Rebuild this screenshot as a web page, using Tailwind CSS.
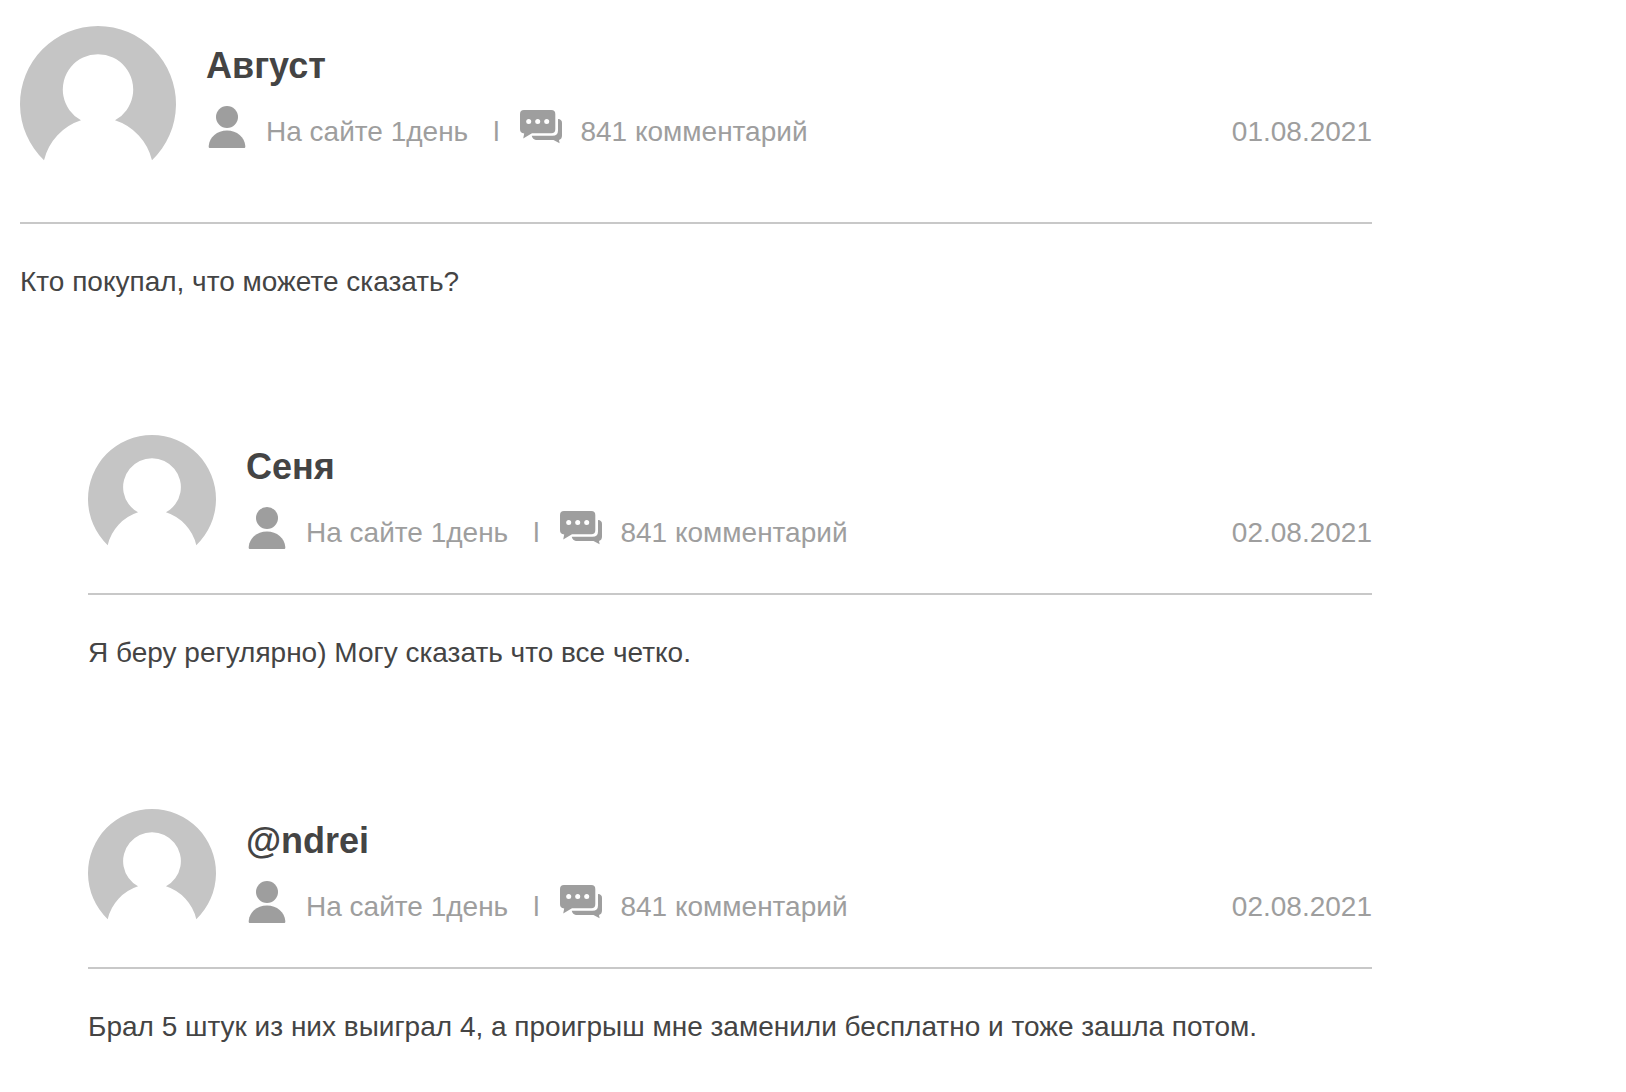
<!DOCTYPE html>
<html lang="ru">

<head>
    <meta charset="UTF-8">
    <meta name="viewport" content="width=device-width, initial-scale=1.0">
    <title>Комментарии</title>
    <script src="https://cdn.jsdelivr.net/npm/@tailwindcss/browser@4"></script>
</head>

<body class="bg-white text-[#444444] font-['Liberation_Sans',Arial,sans-serif] text-[28px] leading-8">
    <!-- Shared icons -->
    <svg class="hidden" aria-hidden="true">
        <symbol id="avatar" viewBox="0 0 156 156">
            <path fill="#c5c5c5" d="M24 134.3A78 78 0 1 1 132 134.3A55.5 55.5 0 0 0 95 94.3A35.2 35.2 0 1 0 61 94.3A55.5 55.5 0 0 0 24 134.3Z" />
        </symbol>
        <symbol id="user" viewBox="0 0 42 42">
            <circle cx="21" cy="11" r="11" />
            <path d="M2.7 40C3.4 31 11 24.5 21 24.5S38.6 31 39.3 40v.8q0 1.2-1 1.2H3.7q-1 0-1-1.2z" />
        </symbol>
        <symbol id="comments" viewBox="0 0 42 42">
            <path d="M4 4H31.3a4 4 0 0 1 4 4V23.3a4 4 0 0 1-4 4H12L3.2 32.5L4.2 27.6Q0 27 0 23.3V8a4 4 0 0 1 4-4Z" />
            <path d="M38 13Q42 13.3 42 17V29.5Q42 33 39 34L39.6 37.2L33.5 34H16Q12.8 33.7 11.7 29.8H32.5Q38 29.8 38 24.5Z" />
            <g fill="#fff">
                <circle cx="8.7" cy="15.5" r="2.5" />
                <circle cx="17.7" cy="15.5" r="2.5" />
                <circle cx="26.7" cy="15.5" r="2.5" />
            </g>
        </symbol>
    </svg>

    <main class="max-w-[1392px] px-5 pt-[26px] pb-8">
        <article>
            <header class="flex gap-[30px] border-b-2 border-[#c8c8c8] pb-10">
                <svg class="size-[156px] shrink-0"><use href="#avatar" /></svg>
                <div class="flex-1 pt-[18px]">
                    <h2 class="text-4xl leading-[44px] font-bold">Август</h2>
                    <div class="mt-[18px] flex items-end text-[#9e9e9e]">
                        <svg class="size-[42px] shrink-0 fill-current"><use href="#user" /></svg>
                        <span class="ml-[18px]">На сайте 1день</span>
                        <span class="mr-[21px] ml-[25px]">l</span>
                        <svg class="size-[42px] shrink-0 fill-current"><use href="#comments" /></svg>
                        <span class="ml-[18px]">841 комментарий</span>
                        <time class="ml-auto" datetime="2021-08-01">01.08.2021</time>
                    </div>
                </div>
            </header>
            <p class="mt-[42px]">Кто покупал, что можете сказать?</p>
        </article>

        <!-- Replies -->
        <section class="mt-[137px] ml-[68px] flex flex-col gap-[140px]">
            <article>
                <header class="flex gap-[30px] border-b-2 border-[#c8c8c8] pb-[30px]">
                    <svg class="size-32 shrink-0"><use href="#avatar" /></svg>
                    <div class="flex-1 pt-[10px]">
                        <h2 class="text-4xl leading-[44px] font-bold">Сеня</h2>
                        <div class="mt-[18px] flex items-end text-[#9e9e9e]">
                            <svg class="size-[42px] shrink-0 fill-current"><use href="#user" /></svg>
                            <span class="ml-[18px]">На сайте 1день</span>
                            <span class="mr-[21px] ml-[25px]">l</span>
                            <svg class="size-[42px] shrink-0 fill-current"><use href="#comments" /></svg>
                            <span class="ml-[18px]">841 комментарий</span>
                            <time class="ml-auto" datetime="2021-08-02">02.08.2021</time>
                        </div>
                    </div>
                </header>
                <p class="mt-[42px]">Я беру регулярно) Могу сказать что все четко.</p>
            </article>

            <article>
                <header class="flex gap-[30px] border-b-2 border-[#c8c8c8] pb-[30px]">
                    <svg class="size-32 shrink-0"><use href="#avatar" /></svg>
                    <div class="flex-1 pt-[10px]">
                        <h2 class="text-4xl leading-[44px] font-bold">@ndrei</h2>
                        <div class="mt-[18px] flex items-end text-[#9e9e9e]">
                            <svg class="size-[42px] shrink-0 fill-current"><use href="#user" /></svg>
                            <span class="ml-[18px]">На сайте 1день</span>
                            <span class="mr-[21px] ml-[25px]">l</span>
                            <svg class="size-[42px] shrink-0 fill-current"><use href="#comments" /></svg>
                            <span class="ml-[18px]">841 комментарий</span>
                            <time class="ml-auto" datetime="2021-08-02">02.08.2021</time>
                        </div>
                    </div>
                </header>
                <p class="mt-[42px]">Брал 5 штук из них выиграл 4, а проигрыш мне заменили бесплатно и тоже зашла потом.</p>
            </article>
        </section>
    </main>
</body>

</html>
